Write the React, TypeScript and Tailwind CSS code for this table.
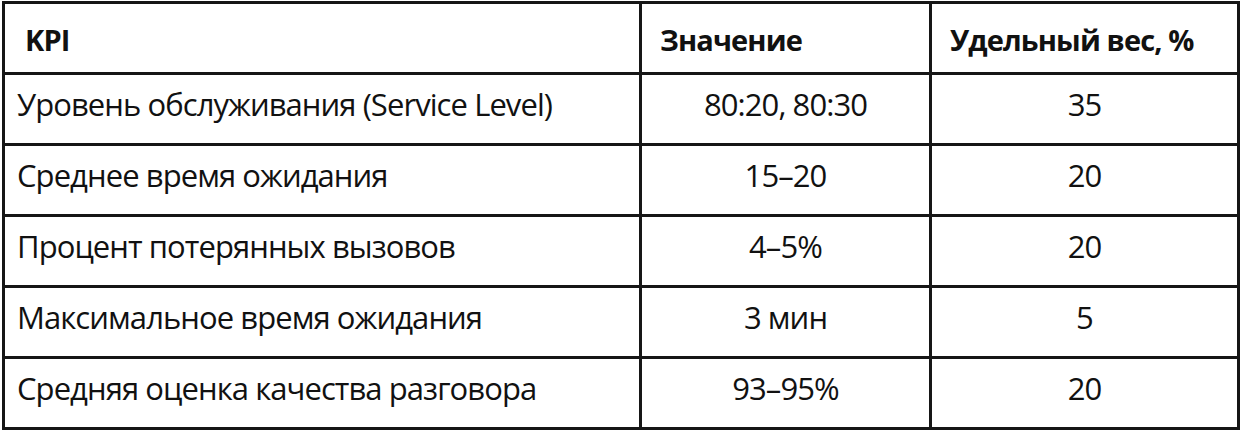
const rows = [
  { name: 'Уровень обслуживания (Service Level)', value: '80:20, 80:30', weight: '35' },
  { name: 'Среднее время ожидания', value: '15–20', weight: '20' },
  { name: 'Процент потерянных вызовов', value: '4–5%', weight: '20' },
  { name: 'Максимальное время ожидания', value: '3 мин', weight: '5' },
  { name: 'Средняя оценка качества разговора', value: '93–95%', weight: '20' },
];

const App = () => {
  return (
    <div className="h-[432px] w-[1246px] overflow-hidden bg-white pl-[2px] pt-[1px] font-['Open_Sans',sans-serif] text-[#111]">
      <table className="w-[1238px] table-fixed border-collapse border-[3px] border-[#161616]">
        <colgroup>
          <col className="w-[637px]" />
          <col className="w-[290px]" />
          <col />
        </colgroup>
        <thead>
          <tr className="h-[71px]">
            <th className="border-[3px] border-[#161616] pl-[20px] pt-[4px] text-left text-[29px] font-bold tracking-[-0.03em]">
              KPI
            </th>
            <th className="border-[3px] border-[#161616] pl-[18px] pt-[4px] text-left text-[29px] font-bold tracking-[-0.03em]">
              Значение
            </th>
            <th className="border-[3px] border-[#161616] pl-[18px] pt-[4px] text-left text-[29px] font-bold tracking-[-0.03em]">
              Удельный вес, %
            </th>
          </tr>
        </thead>
        <tbody>
          {rows.map((row) => (
            <tr key={row.name} className="h-[71px]">
              <td className="border-[3px] border-[#161616] pb-[10px] pl-[12px] text-[31px] font-medium tracking-[-0.03em]">
                {row.name}
              </td>
              <td className="border-[3px] border-[#161616] pb-[10px] text-center text-[31px] font-medium tracking-[-0.03em]">
                {row.value}
              </td>
              <td className="border-[3px] border-[#161616] pb-[10px] text-center text-[31px] font-medium tracking-[-0.03em]">
                {row.weight}
              </td>
            </tr>
          ))}
        </tbody>
      </table>
    </div>
  );
};

export default App;
